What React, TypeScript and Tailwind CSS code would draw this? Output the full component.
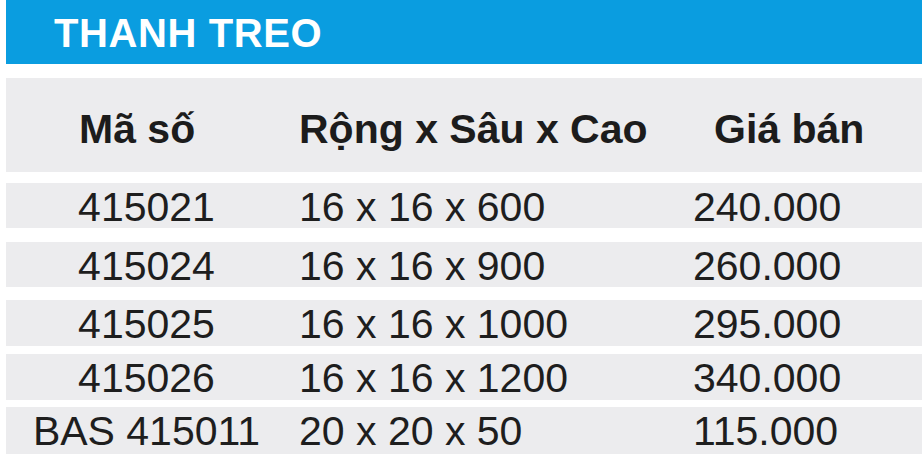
const rows = [
  { code: "415021", size: "16 x 16 x 600", price: "240.000", cls: "mt-[11px] h-[45px]" },
  { code: "415024", size: "16 x 16 x 900", price: "260.000", cls: "mt-[14px] h-[45px]" },
  { code: "415025", size: "16 x 16 x 1000", price: "295.000", cls: "mt-[13px] h-[46px]" },
  { code: "415026", size: "16 x 16 x 1200", price: "340.000", cls: "mt-[8px] h-[46px]" },
  { code: "BAS 415011", size: "20 x 20 x 50", price: "115.000", cls: "mt-[7px] h-[47px]" },
];

export default function App() {
  return (
    <div className="w-[922px] h-[460px] overflow-hidden bg-white font-['Liberation_Sans',Arial,sans-serif]">
      {/* title bar */}
      <div className="ml-[6px] h-[64px] bg-[#0a9de0] pt-[2px] pl-[48px]">
        <h1 className="text-[40px] leading-[62px] font-bold tracking-[0.6px] text-white">THANH TREO</h1>
      </div>

      {/* column header */}
      <div className="ml-[6px] mt-[14px] flex h-[94px] bg-[#ececee] pt-[28px] text-[41px] leading-[46px] font-bold text-[#1c1c1c]">
        <div className="w-[293px] pl-[73px]">Mã số</div>
        <div className="w-[394px]">Rộng x Sâu x Cao</div>
        <div className="pl-[21px]">Giá bán</div>
      </div>

      {rows.map((r) => (
        <div
          key={r.code}
          className={`ml-[6px] flex bg-[#ececee] pt-[1px] text-[41px] leading-[46px] text-[#1e1e1e] ${r.cls}`}
        >
          <div className="w-[293px] pr-[12px] text-center whitespace-nowrap">{r.code}</div>
          <div className="w-[394px] whitespace-nowrap">{r.size}</div>
          <div className="whitespace-nowrap">{r.price}</div>
        </div>
      ))}
    </div>
  );
}
